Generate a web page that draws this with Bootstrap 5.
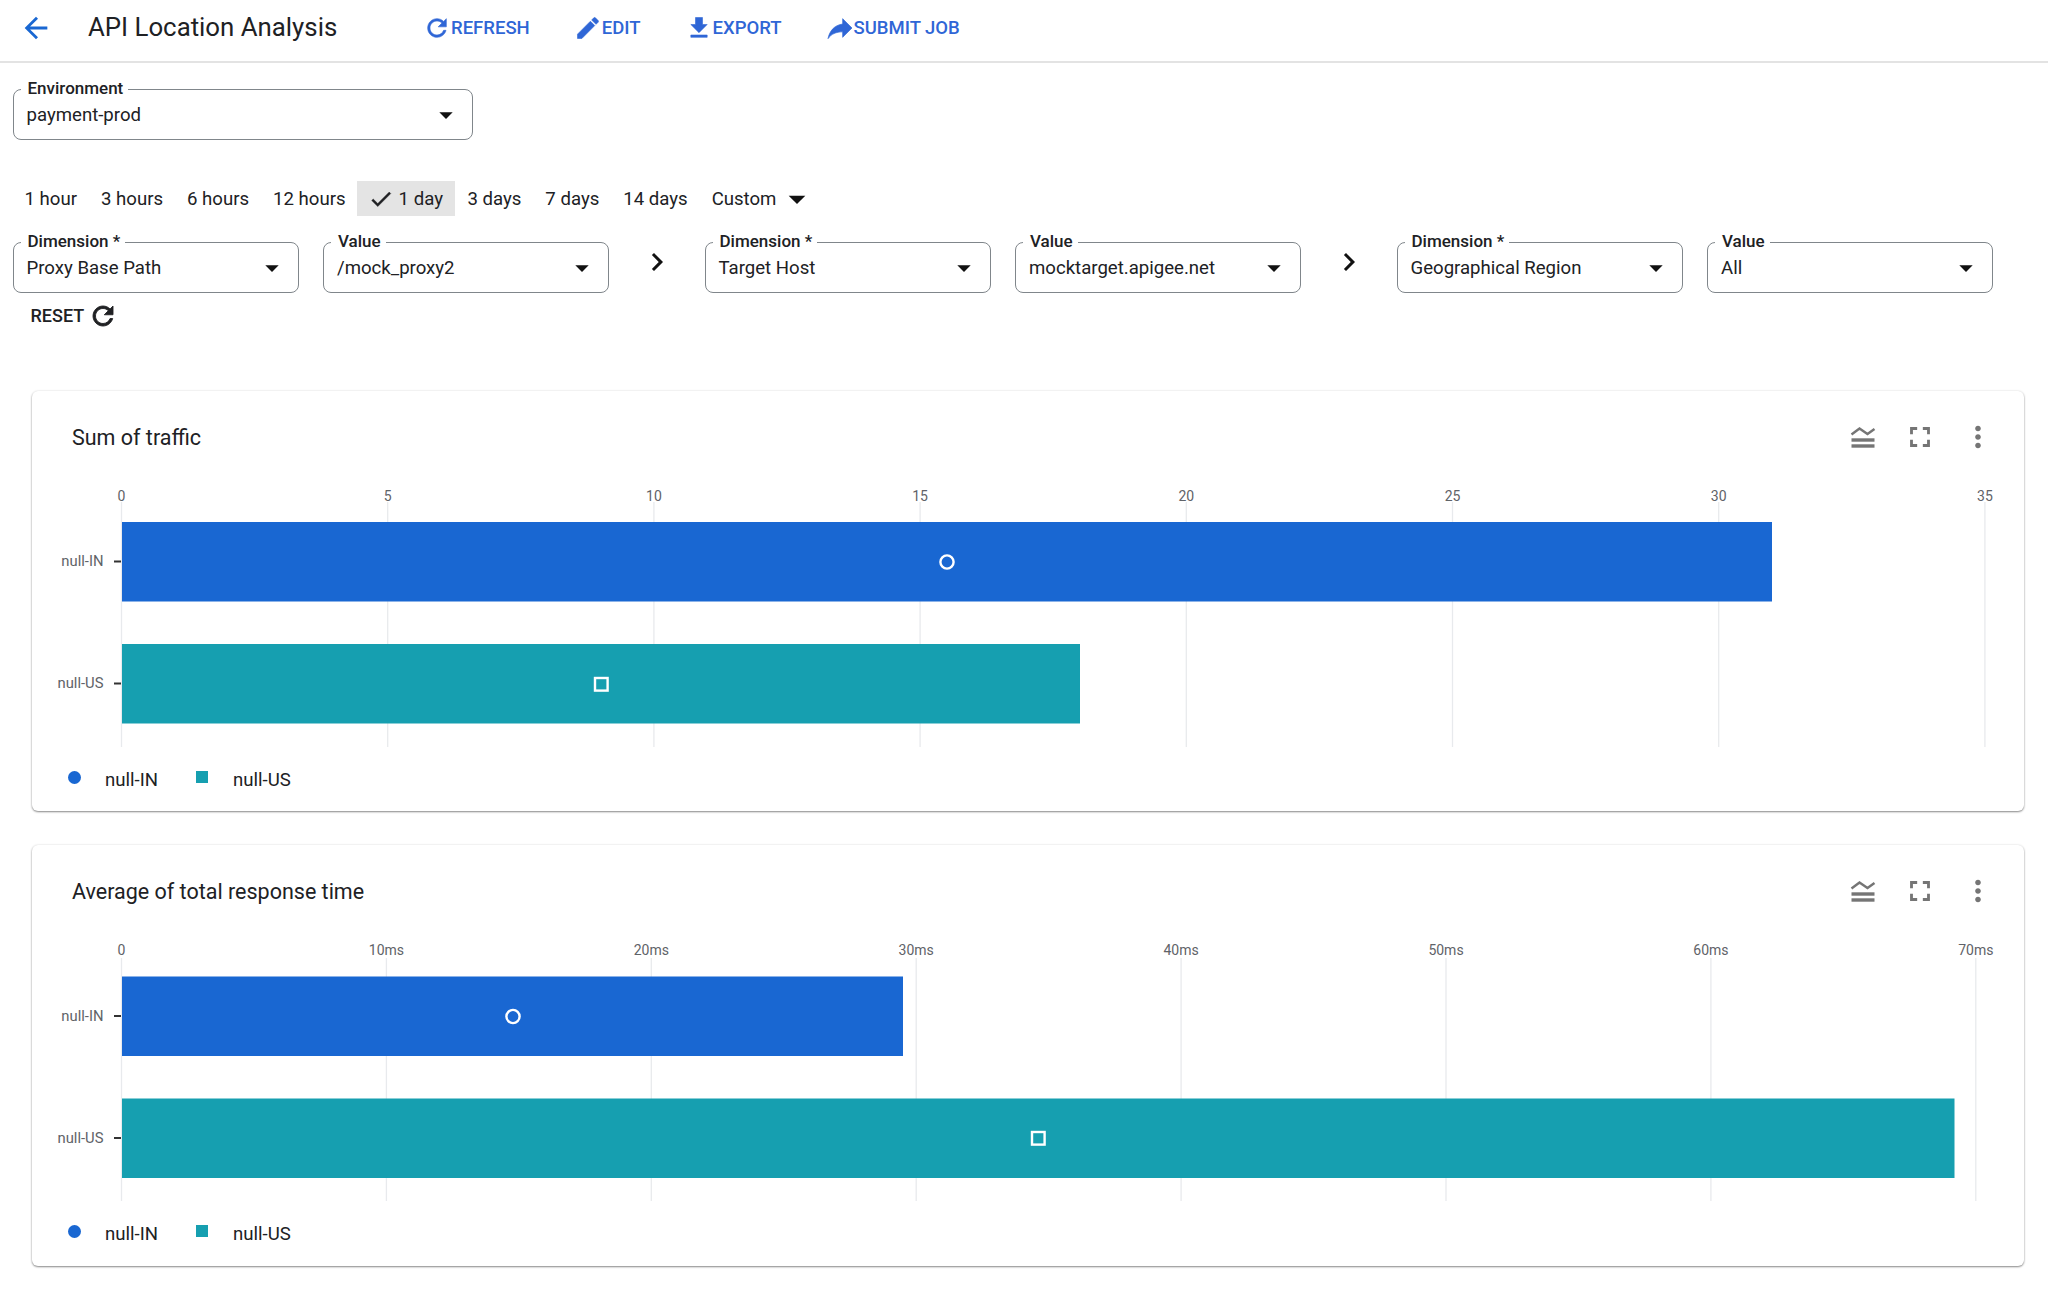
<!doctype html>
<html lang="en">
<head>
<meta charset="utf-8">
<title>API Location Analysis</title>
<link rel="stylesheet" href="https://cdn.jsdelivr.net/npm/bootstrap@5.3.0/dist/css/bootstrap.min.css">
<style>
html,body{background:#fff;font-family:Roboto,"Liberation Sans",sans-serif;color:#202124}
.toolbar{height:63px;border-bottom:2px solid #e3e3e3;padding:0 0 5px 19px;flex-wrap:nowrap;justify-content:flex-start}
.back-ico{width:34px;height:34px;fill:#1967d2;display:block}
.page-ttl{font-size:25.8px;font-weight:400;margin:0 0 0 35px;line-height:1;color:#202124;width:335px}
.tool-btn{display:flex;align-items:center;padding:0;border:0;background:none;color:#2f66d6;font-size:18.5px;font-weight:500;line-height:1;--bs-btn-padding-x:0;text-transform:uppercase}
.tool-btn svg{width:28px;height:28px;fill:currentColor;stroke:currentColor;stroke-width:.5;flex:none}
.tool-btn .submit-ico{width:32px;height:32px;margin:0 -3px 0 -1px}
.tool-row{gap:44px}
.wrap-main{padding:26px 0 0 12.5px;width:2024px}
.fld{position:relative;height:51px;width:286px;border:1.5px solid #80868b;border-radius:8px;padding:0 10px 0 13px;font-size:18.6px;color:#202124;background:#fff;flex:none}
.fld-wide{width:460px}
.fld-val{padding-top:3px}
.fld-lbl{position:absolute;left:7px;top:-11px;padding:0 5px 0 7px;background:#fff;font-size:17px;font-weight:500;line-height:18px;color:#202124}
.caret{width:32px;height:32px;fill:#111;flex:none}
.chips{margin-top:41px;height:35px}
.chip{display:flex;align-items:center;height:35px;padding:1.5px 12px 0;font-size:18.6px;line-height:1;color:#202124;background:none;border:0}
.chip-on{background:#e4e4e4;padding:1.5px 12.5px 0 11px;margin-left:-1px}
.chip svg{width:26px;height:26px;fill:#202124;stroke:#202124;stroke-width:.4;margin:0 5px 0 0}
.chip .caret-big{width:40px;height:40px;fill:#111;stroke:none;margin:-1.5px 0 0 1px}
.dims{margin-top:26px}
.gap-fld{margin-left:24.5px}
.chev-cell{width:95.5px;flex:none;display:flex;justify-content:center;padding-top:2px}
.chev-cell svg{width:36px;height:36px;fill:#111}
.reset-btn{display:flex;align-items:center;height:34px;margin:6px 0 0 18px;padding:0;background:none;border:0;font-size:18px;font-weight:500;color:#202124;line-height:1}
.reset-btn svg{width:30px;height:30px;fill:#202124;stroke:#202124;stroke-width:.7;margin-left:4px}
.chart-card{margin:0 0 34px 19.5px;width:1992px;border:0;border-radius:6px;box-shadow:0 1px 2px rgba(0,0,0,.45),0 0 3px rgba(0,0,0,.08)}
.cards{margin-top:58px}
.chart-head{height:92px;padding:0 29.5px 0 40px}
.chart-ttl{font-size:21.5px;font-weight:400;color:#202124;margin:1px 0 0;line-height:1}
.act-row{gap:23.5px}
.act-ico{width:34px;height:34px;fill:#757575;display:block}
.plot{display:block;width:1992px;height:270px}
.plot text{font-family:Roboto,"Liberation Sans",sans-serif;font-size:14px;fill:#5f6368}
.plot .row-lbl text{font-size:14.8px}
.grid-ln{stroke:#e8eaed;stroke-width:1.3}
.tick-ln{stroke:#333;stroke-width:2}
.bar-a{fill:#1967d2}
.bar-b{fill:#169fb0}
.mark{fill:none;stroke:#fff;stroke-width:2.4}
.legend-row{height:26px;padding-left:36px;margin-top:14px;font-size:18.6px;line-height:26px;color:#202124}
.dot-a{width:13px;height:13px;border-radius:50%;background:#1967d2;margin:-5px 24px 0 0}
.dot-b{width:12px;height:12px;background:#169fb0;margin:-7px 25px 0 0}
.lg-lbl{margin-right:38px}
.chart-card-tall{height:421px}
.chart-card-std{height:420px}
</style>
</head>
<body>
<svg width="0" height="0" class="d-block">
<defs>
<symbol id="i-refresh" viewBox="0 0 24 24"><path d="M17.65 6.35C16.2 4.9 14.21 4 12 4c-4.42 0-7.99 3.58-7.99 8s3.57 8 7.99 8c3.73 0 6.84-2.55 7.73-6h-2.08c-.82 2.33-3.04 4-5.65 4-3.31 0-6-2.69-6-6s2.69-6 6-6c1.66 0 3.14.69 4.22 1.78L13 11h7V4l-2.35 2.35z"/></symbol>
<symbol id="i-drop" viewBox="0 0 24 24"><path d="M7 10l5 5 5-5z"/></symbol>
<symbol id="i-chev" viewBox="0 0 24 24"><path d="M10 6 8.59 7.41 13.17 12l-4.58 4.59L10 18l6-6z"/></symbol>
<symbol id="i-style" viewBox="0 0 34 34"><path d="M5.500 14.500 L13.500 8.500 L21.500 14 L28.500 9" fill="none" stroke="#757575" stroke-width="2.400"/><rect x="5.500" y="18.300" width="23" height="3.400"/><rect x="5.500" y="24.300" width="23" height="3.400"/></symbol>
<symbol id="i-full" viewBox="0 0 24 24"><path d="M7 14H5v5h5v-2H7v-3zm-2-4h2V7h3V5H5v5zm12 7h-3v2h5v-5h-2v3zM14 5v2h3v3h2V5h-5z"/></symbol>
<symbol id="i-more" viewBox="0 0 24 24"><path d="M12 8c1.100 0 2-.9 2-2s-.9-2-2-2-2 .9-2 2 .9 2 2 2zm0 2c-1.100 0-2 .9-2 2s.9 2 2 2 2-.9 2-2-.9-2-2-2zm0 6c-1.100 0-2 .9-2 2s.9 2 2 2 2-.9 2-2-.9-2-2-2z"/></symbol>
</defs>
</svg>

<nav class="navbar toolbar d-flex align-items-center">
  <svg class="back-ico" viewBox="0 0 24 24"><path d="M20 11H7.830l5.590-5.590L12 4l-8 8 8 8 1.410-1.410L7.830 13H20v-2z"/></svg>
  <h1 class="page-ttl">API Location Analysis</h1>
  <div class="d-flex align-items-center tool-row">
    <button class="btn tool-btn"><svg><use href="#i-refresh"/></svg>Refresh</button>
    <button class="btn tool-btn"><svg viewBox="0 0 24 24"><path d="M3 17.250V21h3.750L17.810 9.940l-3.750-3.750L3 17.250zM20.710 7.040c.39-.39.39-1.020 0-1.410l-2.340-2.340c-.39-.39-1.020-.39-1.410 0l-1.830 1.830 3.750 3.750 1.830-1.830z"/></svg>Edit</button>
    <button class="btn tool-btn"><svg viewBox="0 0 24 24"><path d="M19 9h-4V3H9v6H5l7 7 7-7zM5 18v2h14v-2H5z"/></svg>Export</button>
    <button class="btn tool-btn"><svg class="submit-ico" viewBox="0 0 24 24"><path d="M14 9V5l7 7-7 7v-4.100c-5 0-8.500 1.600-11 5.100 1-5 4-10 11-11z"/></svg>Submit Job</button>
  </div>
</nav>

<main class="wrap-main">
  <div class="fld fld-wide d-flex align-items-center justify-content-between">
    <span class="fld-lbl">Environment</span><span class="fld-val">payment-prod</span>
    <svg class="caret"><use href="#i-drop"/></svg>
  </div>

  <div class="chips d-flex align-items-center">
    <button class="chip">1 hour</button>
    <button class="chip">3 hours</button>
    <button class="chip">6 hours</button>
    <button class="chip">12 hours</button>
    <button class="chip chip-on"><svg viewBox="0 0 24 24"><path d="M9 16.170 4.830 12l-1.420 1.410L9 19 21 7l-1.410-1.410z"/></svg>1 day</button>
    <button class="chip">3 days</button>
    <button class="chip">7 days</button>
    <button class="chip">14 days</button>
    <button class="chip">Custom<svg class="caret-big"><use href="#i-drop"/></svg></button>
  </div>

  <div class="dims d-flex align-items-start">
    <div class="fld d-flex align-items-center justify-content-between"><span class="fld-lbl">Dimension *</span><span class="fld-val">Proxy Base Path</span><svg class="caret"><use href="#i-drop"/></svg></div>
    <div class="fld gap-fld d-flex align-items-center justify-content-between"><span class="fld-lbl">Value</span><span class="fld-val">/mock_proxy2</span><svg class="caret"><use href="#i-drop"/></svg></div>
    <div class="chev-cell"><svg><use href="#i-chev"/></svg></div>
    <div class="fld d-flex align-items-center justify-content-between"><span class="fld-lbl">Dimension *</span><span class="fld-val">Target Host</span><svg class="caret"><use href="#i-drop"/></svg></div>
    <div class="fld gap-fld d-flex align-items-center justify-content-between"><span class="fld-lbl">Value</span><span class="fld-val">mocktarget.apigee.net</span><svg class="caret"><use href="#i-drop"/></svg></div>
    <div class="chev-cell"><svg><use href="#i-chev"/></svg></div>
    <div class="fld d-flex align-items-center justify-content-between"><span class="fld-lbl">Dimension *</span><span class="fld-val">Geographical Region</span><svg class="caret"><use href="#i-drop"/></svg></div>
    <div class="fld gap-fld d-flex align-items-center justify-content-between"><span class="fld-lbl">Value</span><span class="fld-val">All</span><svg class="caret"><use href="#i-drop"/></svg></div>
  </div>

  <button class="reset-btn">RESET<svg><use href="#i-refresh"/></svg></button>

  <div class="cards">
    <section class="card chart-card chart-card-std">
      <div class="chart-head d-flex align-items-center justify-content-between">
        <h2 class="chart-ttl">Sum of traffic</h2>
        <div class="d-flex act-row">
          <svg class="act-ico"><use href="#i-style"/></svg>
          <svg class="act-ico"><use href="#i-full"/></svg>
          <svg class="act-ico"><use href="#i-more"/></svg>
        </div>
      </div>
      <svg class="plot" viewBox="0 0 1992 270">
        <g class="grid-ln">
          <line x1="89.5" x2="89.500" y1="19" y2="264"/><line x1="355.7" x2="355.7" y1="19" y2="264"/><line x1="621.9" x2="621.9" y1="19" y2="264"/><line x1="888.100" x2="888.100" y1="19" y2="264"/><line x1="1154.3" x2="1154.3" y1="19" y2="264"/><line x1="1420.5" x2="1420.5" y1="19" y2="264"/><line x1="1686.7" x2="1686.7" y1="19" y2="264"/><line x1="1952.9" x2="1952.9" y1="19" y2="264"/>
        </g>
        <g text-anchor="middle">
          <text x="89.5" y="18">0</text><text x="355.7" y="18">5</text><text x="621.9" y="18">10</text><text x="888.1" y="18">15</text><text x="1154.3" y="18">20</text><text x="1420.5" y="18">25</text><text x="1686.7" y="18">30</text><text x="1952.9" y="18">35</text>
        </g>
        <rect class="bar-a" x="90" y="39" width="1650" height="79.500"/>
        <rect class="bar-b" x="90" y="161" width="958" height="79.500"/>
        <g class="tick-ln"><line x1="82" x2="89" y1="78.5" y2="78.5"/><line x1="82" x2="89" y1="200.5" y2="200.5"/></g>
        <g class="row-lbl" text-anchor="end"><text x="71.500" y="83">null-IN</text><text x="71.500" y="205">null-US</text></g>
        <circle class="mark" cx="915" cy="79" r="6.600"/>
        <rect class="mark" x="563" y="195" width="12.600" height="12.600"/>
      </svg>
      <div class="legend-row d-flex align-items-center">
        <span class="dot-a"></span><span class="lg-lbl">null-IN</span><span class="dot-b"></span><span>null-US</span>
      </div>
    </section>

    <section class="card chart-card chart-card-tall">
      <div class="chart-head d-flex align-items-center justify-content-between">
        <h2 class="chart-ttl">Average of total response time</h2>
        <div class="d-flex act-row">
          <svg class="act-ico"><use href="#i-style"/></svg>
          <svg class="act-ico"><use href="#i-full"/></svg>
          <svg class="act-ico"><use href="#i-more"/></svg>
        </div>
      </div>
      <svg class="plot" viewBox="0 0 1992 270">
        <g class="grid-ln">
          <line x1="89.5" x2="89.500" y1="21" y2="264"/><line x1="354.4" x2="354.4" y1="21" y2="264"/><line x1="619.3" x2="619.3" y1="21" y2="264"/><line x1="884.2" x2="884.2" y1="21" y2="264"/><line x1="1149.100" x2="1149.100" y1="21" y2="264"/><line x1="1414" x2="1414" y1="21" y2="264"/><line x1="1678.9" x2="1678.9" y1="21" y2="264"/><line x1="1943.8" x2="1943.8" y1="21" y2="264"/>
        </g>
        <g text-anchor="middle">
          <text x="89.5" y="18">0</text><text x="354.4" y="18">10ms</text><text x="619.3" y="18">20ms</text><text x="884.2" y="18">30ms</text><text x="1149.1" y="18">40ms</text><text x="1414" y="18">50ms</text><text x="1678.9" y="18">60ms</text><text x="1943.8" y="18">70ms</text>
        </g>
        <rect class="bar-a" x="90" y="39.500" width="781" height="79.500"/>
        <rect class="bar-b" x="90" y="161.500" width="1832.500" height="79.500"/>
        <g class="tick-ln"><line x1="82" x2="89" y1="79" y2="79"/><line x1="82" x2="89" y1="201" y2="201"/></g>
        <g class="row-lbl" text-anchor="end"><text x="71.500" y="83.500">null-IN</text><text x="71.500" y="205.500">null-US</text></g>
        <circle class="mark" cx="481" cy="79.500" r="6.600"/>
        <rect class="mark" x="1000" y="195" width="12.600" height="12.600"/>
      </svg>
      <div class="legend-row d-flex align-items-center">
        <span class="dot-a"></span><span class="lg-lbl">null-IN</span><span class="dot-b"></span><span>null-US</span>
      </div>
    </section>
  </div>
</main>
<script src="https://cdn.jsdelivr.net/npm/bootstrap@5.3.0/dist/js/bootstrap.bundle.min.js"></script>
</body>
</html>
